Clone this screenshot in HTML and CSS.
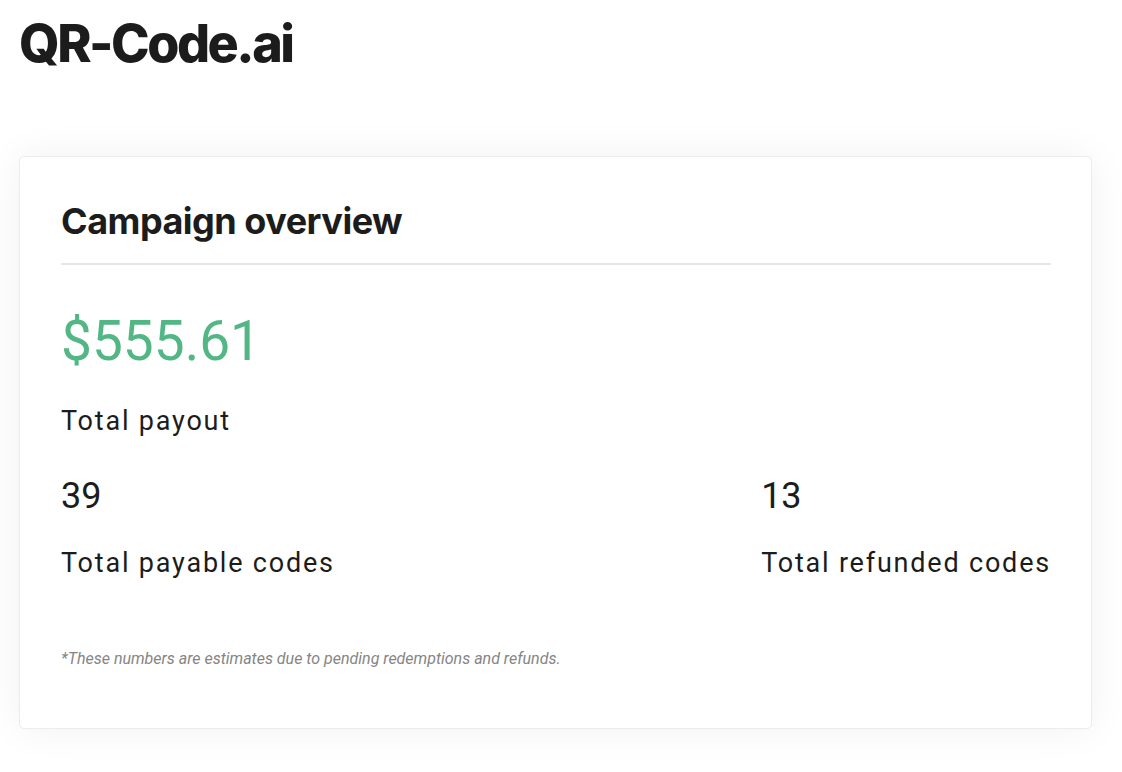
FILE: index.html
```html
<!DOCTYPE html>
<html>
<head>
<meta charset="utf-8">
<title>QR-Code.ai</title>
<link rel="stylesheet" href="styles.css">
</head>
<body>

<div class="page">
  <h1 class="brand">QR-Code.ai</h1>

  <div class="card">
    <h2 class="card-title">Campaign overview</h2>

    <div class="stat stat-main">
      <div class="stat-value stat-value-money">$555.61</div>
      <div class="stat-label">Total payout</div>
    </div>

    <div class="stat-row">
      <div class="stat">
        <div class="stat-value">39</div>
        <div class="stat-label">Total payable codes</div>
      </div>
      <div class="stat">
        <div class="stat-value">13</div>
        <div class="stat-label">Total refunded codes</div>
      </div>
    </div>

    <p class="note">*These numbers are estimates due to pending redemptions and refunds.</p>
  </div>
</div>

</body>
</html>
```

FILE: styles.css
```css
*, *:before, *:after {
  box-sizing: border-box;
}

body {
  margin: 0;
  background: #fff;
  color: #1c1c1c;
  font: 16px/1.2 Roboto, 'Liberation Sans', sans-serif;
  -webkit-font-smoothing: antialiased;
}

.page {
  padding: 14px 30px 40px 19px;
}

.brand {
  margin: 0 0 82px;
  font-family: Inter, Roboto, sans-serif;
  font-weight: 800;
  font-size: 52px;
  line-height: 60px;
  letter-spacing: -2.5px;
  color: #1c1c1c;
}

.card {
  background: #fff;
  border: 1px solid #ececec;
  border-radius: 5px;
  box-shadow: 0 0 40px rgba(0, 0, 0, 0.06);
  padding: 40px 40px 50px 41px;
  min-height: 573px;
}

.card-title {
  margin: 0;
  padding-bottom: 18px;
  border-bottom: 2px solid #e6e6e6;
  font-family: Inter, Roboto, sans-serif;
  font-weight: 700;
  font-size: 36px;
  line-height: 48px;
  letter-spacing: -0.5px;
  color: #1c1c1c;
}

.stat-main {
  margin-top: 44px;
}

.stat-value {
  font-size: 36px;
  line-height: 42px;
  color: #1c1c1c;
}

.stat-value-money {
  font-size: 55px;
  line-height: 64px;
  color: #52b785;
}

.stat-label {
  margin-top: 31px;
  font-size: 27px;
  line-height: 30px;
  letter-spacing: 1.8px;
  color: #1c1c1c;
}

.stat-main .stat-label {
  margin-top: 33px;
}

.stat-row {
  display: flex;
  justify-content: space-between;
  margin-top: 39px;
}

.note {
  margin: 71px 0 0;
  font-size: 16px;
  font-style: italic;
  color: #858585;
}
```
